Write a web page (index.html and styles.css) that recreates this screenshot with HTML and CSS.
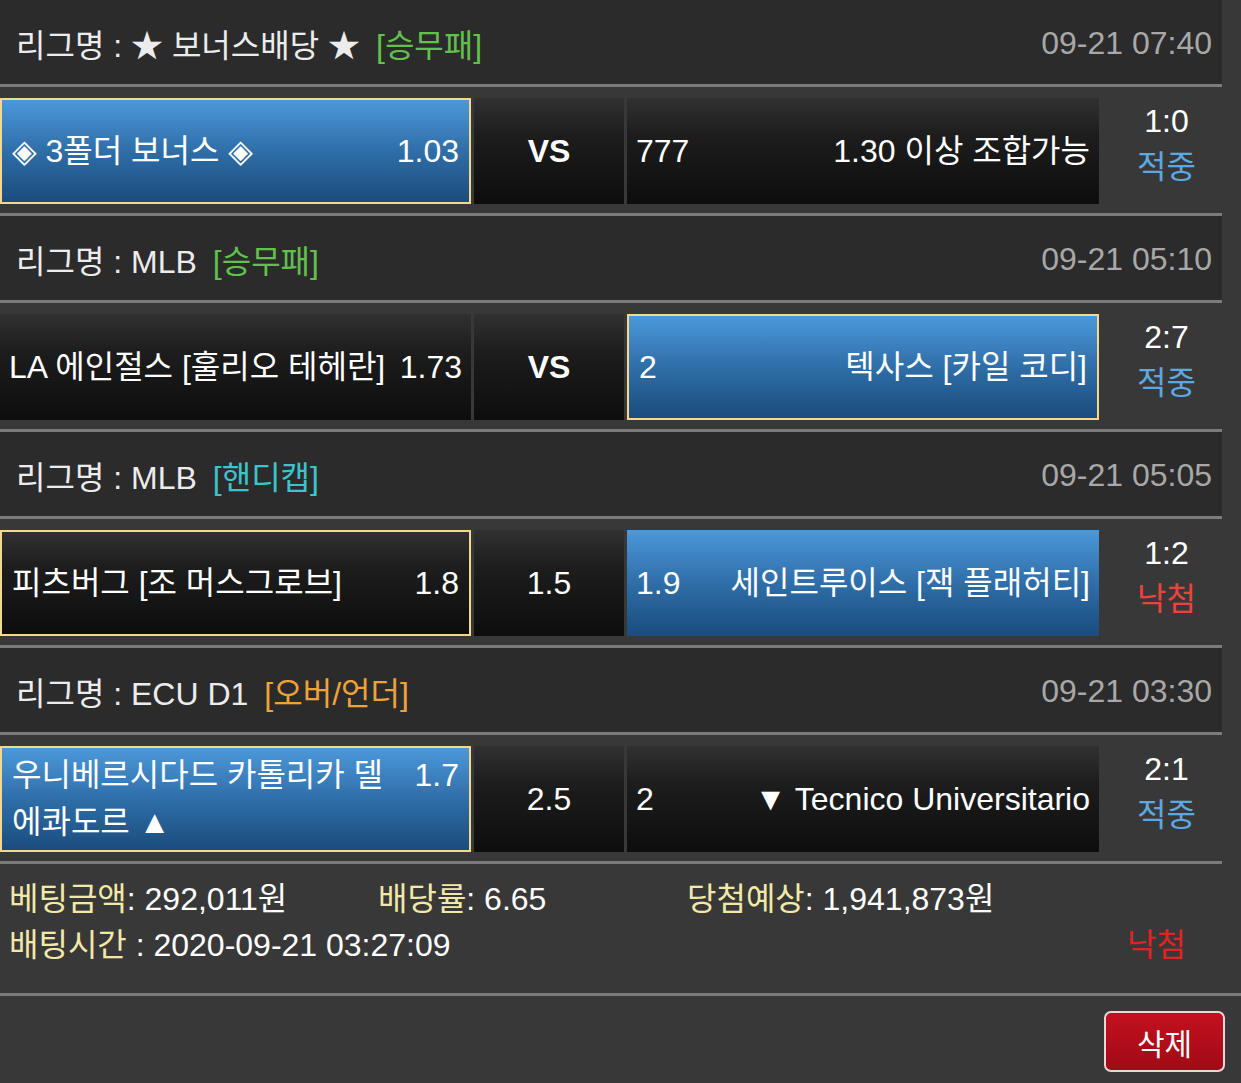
FILE: index.html
```html
<!DOCTYPE html>
<html lang="ko">
<head>
<meta charset="utf-8">
<title>배팅내역</title>
<link rel="stylesheet" href="styles.css">
</head>
<body>
<div class="list">
  <div class="league"><span class="lg">리그명 : ★ 보너스배당 ★<span class="tag green">[승무패]</span></span><span class="date">09-21 07:40</span></div>
  <div class="match">
    <div class="cell home sel"><div class="inner"><span class="odds">1.03</span>◈ 3폴더 보너스 ◈</div></div>
    <div class="cell mid"><b>VS</b></div>
    <div class="cell away"><div class="inner"><span class="odds">777</span>1.30 이상 조합가능</div></div>
    <div class="result"><div>1:0</div><div class="hit">적중</div></div>
  </div>

  <div class="league"><span class="lg">리그명 : MLB<span class="tag green">[승무패]</span></span><span class="date">09-21 05:10</span></div>
  <div class="match">
    <div class="cell home"><div class="inner"><span class="odds">1.73</span>LA 에인절스 [훌리오 테헤란]</div></div>
    <div class="cell mid"><b>VS</b></div>
    <div class="cell away sel"><div class="inner"><span class="odds">2</span>텍사스 [카일 코디]</div></div>
    <div class="result"><div>2:7</div><div class="hit">적중</div></div>
  </div>

  <div class="league"><span class="lg">리그명 : MLB<span class="tag cyan">[핸디캡]</span></span><span class="date">09-21 05:05</span></div>
  <div class="match">
    <div class="cell home sel dark"><div class="inner"><span class="odds">1.8</span>피츠버그 [조 머스그로브]</div></div>
    <div class="cell mid">1.5</div>
    <div class="cell away blue"><div class="inner"><span class="odds">1.9</span>세인트루이스 [잭 플래허티]</div></div>
    <div class="result"><div>1:2</div><div class="miss">낙첨</div></div>
  </div>

  <div class="league"><span class="lg">리그명 : ECU D1<span class="tag orange">[오버/언더]</span></span><span class="date">09-21 03:30</span></div>
  <div class="match">
    <div class="cell home sel"><div class="inner"><span class="odds">1.7</span>우니베르시다드 카톨리카 델 에콰도르 ▲</div></div>
    <div class="cell mid">2.5</div>
    <div class="cell away"><div class="inner"><span class="odds">2</span>▼ Tecnico Universitario</div></div>
    <div class="result"><div>2:1</div><div class="hit">적중</div></div>
  </div>
</div>

<div class="summary">
  <div class="sum-row">
    <span class="c1"><span class="lbl">베팅금액</span>: 292,011원</span>
    <span class="c2"><span class="lbl">배당률</span>: 6.65</span>
    <span class="c3"><span class="lbl">당첨예상</span>: 1,941,873원</span>
  </div>
  <div class="sum-row">
    <span class="c1 wide"><span class="lbl">배팅시간</span> : 2020-09-21 03:27:09</span>
    <span class="lost">낙첨</span>
  </div>
</div>

<div class="footer">
  <button class="del" type="button">삭제</button>
</div>
</body>
</html>
```

FILE: styles.css
```css
html, body {
  margin: 0;
  padding: 0;
  background: #383838;
}
body {
  font-family: "Liberation Sans", "Noto Sans CJK KR", "DejaVu Sans", sans-serif;
  font-size: 32px;
  color: #ffffff;
}
.list {
  width: 1222px;
}
.league {
  background: #2b2b2b;
  border-bottom: 3px solid #7b7b7b;
  display: flex;
  align-items: center;
  justify-content: space-between;
  padding: 2px 10px 0 16px;
  height: 82px;
  color: #ececec;
}
.tag {
  margin-left: 16px;
}
.green { color: #62c04c; }
.cyan { color: #3cc3cb; }
.orange { color: #f0a23a; }
.date {
  color: #a8a8a8;
}
.match {
  display: flex;
  padding: 11px 0 9px;
  border-bottom: 3px solid #7b7b7b;
  gap: 3px;
}
.cell {
  height: 106px;
  box-sizing: border-box;
  display: flex;
  align-items: center;
  background: linear-gradient(to bottom, #313131 0%, #1d1d1d 35%, #0d0d0d 100%);
  line-height: 47px;
  padding: 0 9px;
}
.cell.sel {
  border: 2px solid #f3d88e;
  padding: 0 10px;
  background: linear-gradient(to bottom, #4c98da 0%, #2f6ea8 50%, #1a4c7c 100%);
}
.cell.sel.dark {
  background: linear-gradient(to bottom, #313131 0%, #1d1d1d 35%, #0d0d0d 100%);
}
.cell.blue {
  background: linear-gradient(to bottom, #4c98da 0%, #2f6ea8 50%, #1a4c7c 100%);
}
.home { width: 471px; }
.mid {
  width: 150px;
  justify-content: center;
}
.away { width: 472px; }
.inner {
  width: 100%;
}
.home .inner { text-align: left; }
.home .odds { float: right; margin-left: 12px; }
.away .inner { text-align: right; }
.away .odds { float: left; margin-right: 12px; }
.result {
  flex: 1;
  text-align: center;
  line-height: 46px;
  padding: 0 0 0 12px;
  margin-left: -3px;
}
.hit { color: #5ba8e2; }
.miss { color: #e8463c; }
.summary {
  padding: 12px 0 25px 9px;
  border-bottom: 3px solid #7b7b7b;
  line-height: 46px;
}
.sum-row {
  display: flex;
}
.c1 { width: 369px; }
.c1.wide { flex: 1; }
.c2 { width: 309px; }
.lbl { color: #f2e9a8; }
.lost {
  color: #e02424;
  margin-right: 55px;
}
.footer {
  display: flex;
  justify-content: flex-end;
  padding: 15px 16px 10px;
}
.del {
  width: 121px;
  height: 61px;
  border: 2px solid #ead6d6;
  border-radius: 7px;
  background: linear-gradient(to bottom, #c4101e, #a00a16);
  color: #ffffff;
  font-family: "Liberation Sans", "Noto Sans CJK KR", sans-serif;
  font-size: 30px;
  padding: 0;
}
```
